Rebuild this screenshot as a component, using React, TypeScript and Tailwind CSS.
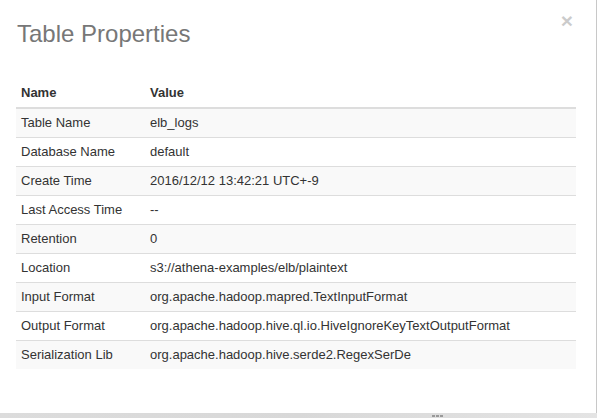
import React from "react";

const rows: [string, string][] = [
  ["Table Name", "elb_logs"],
  ["Database Name", "default"],
  ["Create Time", "2016/12/12 13:42:21 UTC+-9"],
  ["Last Access Time", "--"],
  ["Retention", "0"],
  ["Location", "s3://athena-examples/elb/plaintext"],
  ["Input Format", "org.apache.hadoop.mapred.TextInputFormat"],
  ["Output Format", "org.apache.hadoop.hive.ql.io.HiveIgnoreKeyTextOutputFormat"],
  ["Serialization Lib", "org.apache.hadoop.hive.serde2.RegexSerDe"],
];

export default function App() {
  return (
    <div
      className="w-[597px] h-[418px] bg-[#dedede] flex flex-col overflow-hidden"
      style={{ fontFamily: '"Liberation Sans", Arial, Helvetica, sans-serif' }}
    >
      <div className="w-[597px] h-[413px] bg-white border-r border-[#c8c8c8] flex flex-col relative">
        <button className="absolute right-[23px] top-[10px] text-[21px] leading-[21px] font-bold text-black opacity-20">
          ×
        </button>
        <h1 className="pl-[17px] pt-[20px] text-[24px] leading-[27px] text-[#777777] font-normal">
          Table Properties
        </h1>
        <div className="mx-[16px] mt-[32px] w-[560px] text-[13px] text-[#333333]">
          <div className="flex h-[30px] items-center border-b-2 border-[#dddddd] font-bold">
            <div className="w-[129px] pl-[5px]">Name</div>
            <div className="pl-[5px]">Value</div>
          </div>
          {rows.map(([k, v], i) => (
            <div
              key={k}
              className={
                "flex items-center " +
                (i === 0 ? "h-[28px] " : "h-[29px] border-t border-[#dddddd] ") +
                (i % 2 === 0 ? "bg-[#f9f9f9]" : "bg-white")
              }
            >
              <div className="w-[129px] pl-[5px]">{k}</div>
              <div className="pl-[5px]">{v}</div>
            </div>
          ))}
        </div>
      </div>
      <div className="flex-1 flex items-center pl-[432px] gap-[1px] bg-gradient-to-r from-[#dcdcdc] via-[#d8d8d8] to-[#e4e4e4]">
        <span className="w-[3px] h-[2px] bg-[#9a9a9a]" />
        <span className="w-[3px] h-[2px] bg-[#9a9a9a]" />
        <span className="w-[3px] h-[2px] bg-[#9a9a9a]" />
      </div>
    </div>
  );
}
